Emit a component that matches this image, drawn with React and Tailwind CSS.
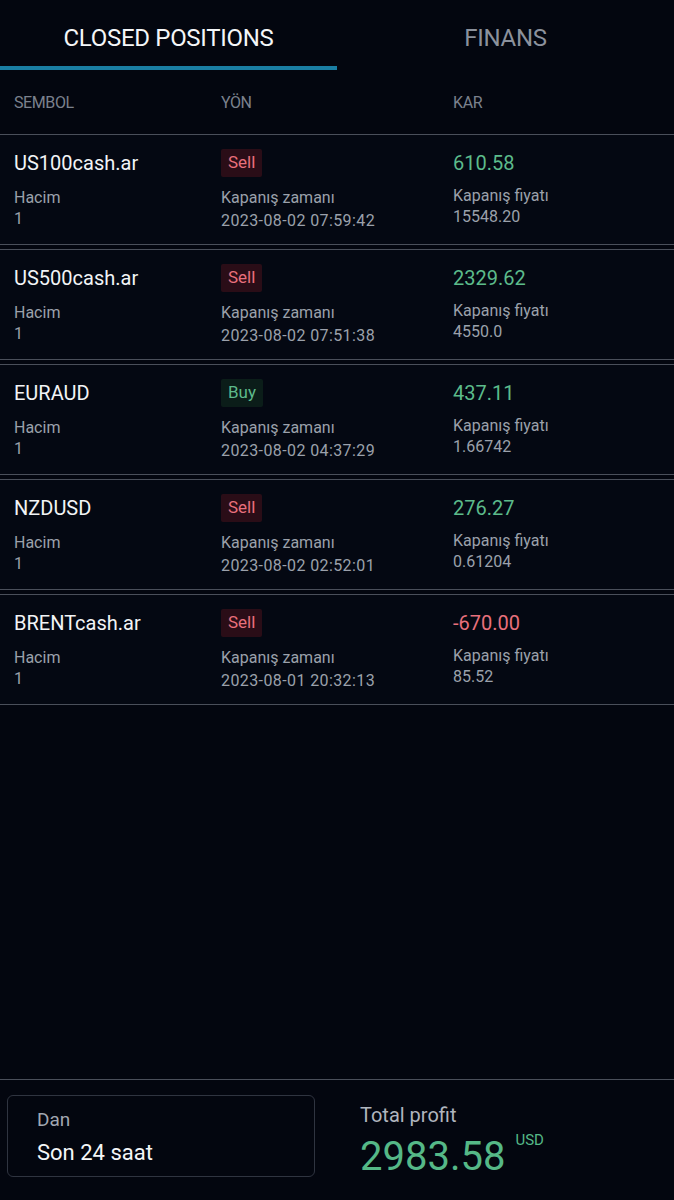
import React from "react";

const rows = [
  { sym: "US100cash.ar", side: "Sell", time: "2023-08-02 07:59:42", pnl: "610.58", price: "15548.20" },
  { sym: "US500cash.ar", side: "Sell", time: "2023-08-02 07:51:38", pnl: "2329.62", price: "4550.0" },
  { sym: "EURAUD", side: "Buy", time: "2023-08-02 04:37:29", pnl: "437.11", price: "1.66742" },
  { sym: "NZDUSD", side: "Sell", time: "2023-08-02 02:52:01", pnl: "276.27", price: "0.61204" },
  { sym: "BRENTcash.ar", side: "Sell", time: "2023-08-01 20:32:13", pnl: "-670.00", price: "85.52" },
];

function Row({ r }) {
  const neg = r.pnl.startsWith("-");
  return (
    <div className="h-[111px] border-y border-[#4a4f5a] bg-[#040812] flex pt-[14px]">
      <div className="w-[221px] pl-[14px] flex flex-col">
        <div className="h-[28px] flex items-center text-[20px] text-[#f2f4f6]">{r.sym}</div>
        <div className="mt-[11px] text-[16px] leading-[20px] text-[#9ba1ab]">Hacim</div>
        <div className="mt-[1px] text-[16px] leading-[20px] text-[#9ba1ab]">1</div>
      </div>
      <div className="w-[232px] flex flex-col">
        <div className="h-[28px] flex items-center">
          {r.side === "Sell" ? (
            <span className="h-[28px] px-[7px] flex items-center rounded-[2px] bg-[#2a0d17] text-[17px] text-[#e8707c]">Sell</span>
          ) : (
            <span className="h-[28px] px-[7px] flex items-center rounded-[2px] bg-[#0b1d19] text-[17px] text-[#5dba8c]">Buy</span>
          )}
        </div>
        <div className="mt-[11px] text-[16px] leading-[20px] text-[#9ba1ab]">Kapanış zamanı</div>
        <div className="mt-[3px] text-[16px] leading-[20px] text-[#9ba1ab] tracking-[0.4px]">{r.time}</div>
      </div>
      <div className="flex-1 flex flex-col">
        <div className={"h-[28px] flex items-center text-[20px] " + (neg ? "text-[#e8707c]" : "text-[#5cbb8b]")}>{r.pnl}</div>
        <div className="mt-[9px] text-[16px] leading-[20px] text-[#9ba1ab]">Kapanış fiyatı</div>
        <div className="mt-[1px] text-[16px] leading-[20px] text-[#9ba1ab]">{r.price}</div>
      </div>
    </div>
  );
}

export default function App() {
  return (
    <div className="h-[1200px] w-[674px] bg-[#03060f] flex flex-col overflow-hidden" style={{ fontFamily: "Roboto, 'Noto Sans', sans-serif" }}>
      <div className="flex h-[70px]">
        <div className="w-[337px] flex flex-col">
          <div className="h-[66px] pt-[10px] flex items-center justify-center text-[24px] text-[#f4f6f8] tracking-[-0.3px]">CLOSED POSITIONS</div>
          <div className="h-[4px] bg-[#1a7ea3]"></div>
        </div>
        <div className="flex-1 flex flex-col">
          <div className="h-[66px] pt-[10px] flex items-center justify-center text-[24px] text-[#8b919c] tracking-[-0.3px]">FINANS</div>
        </div>
      </div>
      <div className="h-[64px] pt-[2px] flex items-center text-[16px] text-[#7b818d] tracking-[-0.4px]">
        <div className="w-[221px] pl-[14px]">SEMBOL</div>
        <div className="w-[232px]">YÖN</div>
        <div className="flex-1">KAR</div>
      </div>
      <div className="flex flex-col gap-[4px]">
        {rows.map((r) => (
          <Row key={r.sym} r={r} />
        ))}
      </div>
      <div className="flex-1"></div>
      <div className="h-[121px] border-t border-[#4a4f5a] flex items-start pt-[15px] pl-[7px] gap-[45px]">
        <div className="w-[308px] h-[82px] rounded-[6px] border border-[#2f3440] pl-[29px] pt-[12px] flex flex-col">
          <div className="text-[19px] leading-[24px] text-[#a1a7b1]">Dan</div>
          <div className="mt-[7px] text-[22px] leading-[28px] text-[#f4f6f8]">Son 24 saat</div>
        </div>
        <div className="flex flex-col pt-[8px]">
          <div className="text-[20px] leading-[24px] text-[#b0b5be]">Total profit</div>
          <div className="flex items-start mt-[8px]">
            <span className="text-[40px] leading-[44px] text-[#55b887]">2983.58</span>
            <span className="ml-[10px] mt-[-4px] text-[15px] leading-[18px] text-[#55b887]">USD</span>
          </div>
        </div>
      </div>
    </div>
  );
}
